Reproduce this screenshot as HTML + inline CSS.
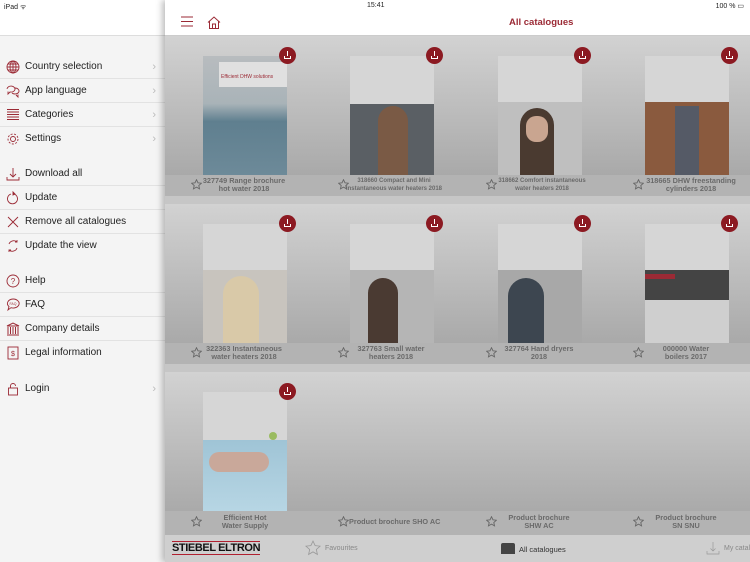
<!DOCTYPE html>
<html><head><meta charset="utf-8"><style>
*{margin:0;padding:0;box-sizing:border-box}
body{width:750px;height:562px;overflow:hidden;position:relative;font-family:"Liberation Sans",sans-serif;background:#f4f4f4}
.abs{position:absolute}
#side{left:0;top:0;width:165px;height:562px;background:#f4f4f4}
#sidetop{left:0;top:0;width:165px;height:36px;background:#fff;border-bottom:1px solid #ddd}
.it{position:absolute;left:0;width:165px;height:24px;font-size:10px;color:#222;line-height:24px;padding-left:25px}
.it.b{border-bottom:1px solid #e2e2e2}
.it svg{position:absolute;left:6px;top:5px}
.chev{position:absolute;right:9px;top:0;color:#bbb;font-size:11px}
#main{left:165px;top:0;width:585px;height:562px;background:#c6c6c6;box-shadow:-3px 0 6px rgba(0,0,0,.25)}
#nav{left:165px;top:0;width:585px;height:36px;background:#fff;border-bottom:1px solid #ccc}
.row{position:absolute;left:165px;width:585px;height:160px;background:linear-gradient(#d2d2d2,#a9a9a9 87%)}
.lab{position:absolute;left:0;bottom:0;width:585px;height:21px;background:#b3b3b3}
.cell{position:absolute;width:146px;height:160px}
.cov{position:absolute;left:38px;top:20px;width:84px;height:119px;background:#d6d6d6;overflow:hidden}
.dl{position:absolute;left:114px;top:11px;width:17px;height:17px;border-radius:50%;background:#8c1a22}
.star{position:absolute;left:26px;top:143px}
.t{position:absolute;left:36px;top:141px;width:86px;text-align:center;font-size:7.3px;font-weight:bold;color:#6a6a6a;line-height:8px}
#tab{left:165px;top:535px;width:585px;height:27px;background:#cfcfcf}
</style></head><body>
<div id="side" class="abs"></div>
<div id="sidetop" class="abs"><span style="position:absolute;left:4px;top:3px;font-size:7px;color:#222">iPad ᯤ</span></div>
<div class="it b" style="top:55px"><svg width="14" height="14" viewBox="0 0 14 14" fill="none" stroke="#9b2a35" stroke-width=".9"><circle cx="7" cy="7" r="6"/><ellipse cx="7" cy="7" rx="3" ry="6"/><path d="M1 7h12M2 4h10M2 10h10M7 1v12"/></svg>Country selection<span class="chev">›</span></div>
<div class="it b" style="top:79px"><svg width="14" height="14" viewBox="0 0 14 14" fill="none" stroke="#9b2a35" stroke-width=".9"><path d="M1 5a4 3 0 1 1 3 3l-2 2v-2.5M6 9a4 3 0 1 0 3-5M10 11l2 2v-2.5"/></svg>App language<span class="chev">›</span></div>
<div class="it b" style="top:103px"><svg width="14" height="14" viewBox="0 0 14 14" stroke="#9b2a35" stroke-width="1"><path d="M1 1.5h12M1 4h12M1 6.5h12M1 9h12M1 11.5h12"/></svg>Categories<span class="chev">›</span></div>
<div class="it" style="top:127px"><svg width="14" height="14" viewBox="0 0 14 14" fill="none" stroke="#9b2a35" stroke-width=".9"><circle cx="7" cy="7" r="2.5"/><circle cx="7" cy="7" r="5" stroke-dasharray="2 1.5"/></svg>Settings<span class="chev">›</span></div>
<div class="it b" style="top:162px"><svg width="14" height="14" viewBox="0 0 14 14" fill="none" stroke="#9b2a35" stroke-width=".9"><path d="M7 1v9M4 7l3 3 3-3M1 10v3h12v-3"/></svg>Download all</div>
<div class="it b" style="top:186px"><svg width="14" height="14" viewBox="0 0 14 14" fill="none" stroke="#9b2a35" stroke-width=".9"><path d="M5 3a5 5 0 1 0 3 0"/><path d="M7 1l2 2-2 1z" fill="#9b2a35"/></svg>Update</div>
<div class="it b" style="top:210px"><svg width="14" height="14" viewBox="0 0 14 14" stroke="#9b2a35" stroke-width=".9"><path d="M2 2l10 10M12 2L2 12"/></svg>Remove all catalogues</div>
<div class="it" style="top:234px"><svg width="14" height="14" viewBox="0 0 14 14" fill="none" stroke="#9b2a35" stroke-width=".9"><path d="M3 5a5 5 0 0 1 8-2M11 9a5 5 0 0 1-8 2M11 1v2h-2M3 13v-2h2"/></svg>Update the view</div>
<div class="it b" style="top:269px"><svg width="14" height="14" viewBox="0 0 14 14" fill="none" stroke="#9b2a35" stroke-width=".9"><circle cx="7" cy="7" r="6"/><text x="7" y="10" font-size="8" text-anchor="middle" fill="#9b2a35" stroke="none">?</text></svg>Help</div>
<div class="it b" style="top:293px"><svg width="14" height="14" viewBox="0 0 14 14" fill="none" stroke="#9b2a35" stroke-width=".9"><path d="M7 1a6 4.5 0 1 1-2 8.7L2 12l1-3.5A6 4.5 0 0 1 7 1z"/><text x="7" y="7" font-size="3.5" text-anchor="middle" fill="#9b2a35" stroke="none">FAQ</text></svg>FAQ</div>
<div class="it b" style="top:317px"><svg width="14" height="14" viewBox="0 0 14 14" fill="none" stroke="#9b2a35" stroke-width="1"><path d="M1 4L7 1l6 3zM2 5v7M4.5 5v7M7 5v7M9.5 5v7M12 5v7M1 13h12"/></svg>Company details</div>
<div class="it" style="top:341px"><svg width="14" height="14" viewBox="0 0 14 14" fill="none" stroke="#9b2a35" stroke-width=".9"><rect x="2" y="1" width="10" height="12"/><text x="7" y="10" font-size="7" text-anchor="middle" fill="#9b2a35" stroke="none">$</text></svg>Legal information</div>
<div class="it" style="top:377px"><svg width="14" height="14" viewBox="0 0 14 14" fill="none" stroke="#9b2a35" stroke-width=".9"><rect x="2.5" y="6" width="9" height="7"/><path d="M4.5 6V4a2.5 2.5 0 0 1 5 0"/></svg>Login<span class="chev">›</span></div>

<div id="main" class="abs"></div>
<div id="nav" class="abs">
<span style="position:absolute;top:2px;font-size:7px;color:#222;left:202px">15:41</span>
<span style="position:absolute;right:6px;top:2px;font-size:7px;color:#222">100 % ▭</span>
<svg style="position:absolute;left:16px;top:16px" width="12" height="11" viewBox="0 0 12 11" stroke="#9b2a35" stroke-width="1"><path d="M0 1h12M0 5.5h12M0 10h12"/></svg>
<svg style="position:absolute;left:42px;top:16px" width="14" height="13" viewBox="0 0 14 13" fill="none" stroke="#9b2a35" stroke-width="1"><path d="M1 6.5L7 1l6 5.5M2.5 5v7.5h9V5M5.5 12.5V8h3v4.5"/></svg>
<span style="position:absolute;left:344px;top:17px;font-size:9.5px;font-weight:bold;color:#9b2a35">All catalogues</span>
</div>

<div class="row" style="top:36px"><div class="lab"></div>
<div class="cell" style="left:0"><div class="cov" style="background:linear-gradient(#b8bcbf 0,#a9b3b8 40%,#5f7f8f 55%,#6d8a99 100%)"><div style="position:absolute;left:16px;top:6px;width:68px;height:25px;background:#e0e0e0"></div><div style="position:absolute;left:18px;top:18px;font-size:5px;color:#9b2a35">Efficient DHW solutions</div></div><div class="dl"></div><svg class="star" width="11" height="11" viewBox="0 0 12 12" fill="none" stroke="#666" stroke-width="1"><path d="M6 .8l1.6 3.4 3.7.4-2.8 2.5.8 3.7L6 8.9 2.7 10.8l.8-3.7L.7 4.6l3.7-.4z"/></svg><div class="t">327749 Range brochure hot water 2018</div></div>
<div class="cell" style="left:147px"><div class="cov"><div style="position:absolute;left:0;top:48px;width:84px;height:71px;background:#5a5f64"></div><div style="position:absolute;left:28px;top:50px;width:30px;height:69px;border-radius:15px 15px 0 0;background:#7a5a45"></div></div><div class="dl"></div><svg class="star" width="11" height="11" viewBox="0 0 12 12" fill="none" stroke="#666" stroke-width="1"><path d="M6 .8l1.6 3.4 3.7.4-2.8 2.5.8 3.7L6 8.9 2.7 10.8l.8-3.7L.7 4.6l3.7-.4z"/></svg><div class="t" style="font-size:6px;width:100px;left:32px">318660 Compact and Mini instantaneous water heaters 2018</div></div>
<div class="cell" style="left:295px"><div class="cov"><div style="position:absolute;left:0;top:46px;width:84px;height:73px;background:#bfbfbf"></div><div style="position:absolute;left:22px;top:52px;width:34px;height:67px;border-radius:17px 17px 0 0;background:#4a3a30"></div><div style="position:absolute;left:28px;top:60px;width:22px;height:26px;border-radius:10px;background:#c9a590"></div></div><div class="dl"></div><svg class="star" width="11" height="11" viewBox="0 0 12 12" fill="none" stroke="#666" stroke-width="1"><path d="M6 .8l1.6 3.4 3.7.4-2.8 2.5.8 3.7L6 8.9 2.7 10.8l.8-3.7L.7 4.6l3.7-.4z"/></svg><div class="t" style="font-size:6px;width:96px;left:34px">318662 Comfort instantaneous water heaters 2018</div></div>
<div class="cell" style="left:442px"><div class="cov"><div style="position:absolute;left:0;top:46px;width:84px;height:73px;background:#8a5a3e"></div><div style="position:absolute;left:30px;top:50px;width:24px;height:69px;background:#555a66"></div></div><div class="dl"></div><svg class="star" width="11" height="11" viewBox="0 0 12 12" fill="none" stroke="#666" stroke-width="1"><path d="M6 .8l1.6 3.4 3.7.4-2.8 2.5.8 3.7L6 8.9 2.7 10.8l.8-3.7L.7 4.6l3.7-.4z"/></svg><div class="t" style="width:100px;left:34px">318665 DHW freestanding cylinders 2018</div></div>
</div>

<div class="row" style="top:204px"><div class="lab"></div>
<div class="cell" style="left:0"><div class="cov"><div style="position:absolute;left:0;top:46px;width:84px;height:73px;background:#c8c4be"></div><div style="position:absolute;left:20px;top:52px;width:36px;height:67px;border-radius:18px 18px 0 0;background:#d9c9a8"></div></div><div class="dl"></div><svg class="star" width="11" height="11" viewBox="0 0 12 12" fill="none" stroke="#666" stroke-width="1"><path d="M6 .8l1.6 3.4 3.7.4-2.8 2.5.8 3.7L6 8.9 2.7 10.8l.8-3.7L.7 4.6l3.7-.4z"/></svg><div class="t">322363 Instantaneous water heaters 2018</div></div>
<div class="cell" style="left:147px"><div class="cov"><div style="position:absolute;left:0;top:46px;width:84px;height:73px;background:#b5b5b5"></div><div style="position:absolute;left:18px;top:54px;width:30px;height:65px;border-radius:15px 15px 0 0;background:#4a3a32"></div></div><div class="dl"></div><svg class="star" width="11" height="11" viewBox="0 0 12 12" fill="none" stroke="#666" stroke-width="1"><path d="M6 .8l1.6 3.4 3.7.4-2.8 2.5.8 3.7L6 8.9 2.7 10.8l.8-3.7L.7 4.6l3.7-.4z"/></svg><div class="t">327763 Small water heaters 2018</div></div>
<div class="cell" style="left:295px"><div class="cov"><div style="position:absolute;left:0;top:46px;width:84px;height:73px;background:#a8a8a8"></div><div style="position:absolute;left:10px;top:54px;width:36px;height:65px;border-radius:18px 18px 0 0;background:#3d4650"></div></div><div class="dl"></div><svg class="star" width="11" height="11" viewBox="0 0 12 12" fill="none" stroke="#666" stroke-width="1"><path d="M6 .8l1.6 3.4 3.7.4-2.8 2.5.8 3.7L6 8.9 2.7 10.8l.8-3.7L.7 4.6l3.7-.4z"/></svg><div class="t" style="width:70px;left:44px">327764 Hand dryers 2018</div></div>
<div class="cell" style="left:442px"><div class="cov"><div style="position:absolute;left:0;top:46px;width:84px;height:30px;background:#444"></div><div style="position:absolute;left:0;top:50px;width:30px;height:5px;background:#9b2a35"></div><div style="position:absolute;left:0;top:76px;width:84px;height:43px;background:#cfcfcf"></div></div><div class="dl"></div><svg class="star" width="11" height="11" viewBox="0 0 12 12" fill="none" stroke="#666" stroke-width="1"><path d="M6 .8l1.6 3.4 3.7.4-2.8 2.5.8 3.7L6 8.9 2.7 10.8l.8-3.7L.7 4.6l3.7-.4z"/></svg><div class="t" style="width:70px;left:44px">000000 Water boilers 2017</div></div>
</div>

<div class="row" style="top:372px;height:163px"><div class="lab" style="height:24px"></div>
<div class="cell" style="left:0"><div class="cov"><div style="position:absolute;left:0;top:48px;width:84px;height:71px;background:linear-gradient(#9fc4d6,#b7d6e4)"></div><div style="position:absolute;left:6px;top:60px;width:60px;height:20px;border-radius:10px;background:#c9a89a"></div><div style="position:absolute;left:66px;top:40px;width:8px;height:8px;border-radius:50%;background:#9abb60"></div></div><div class="dl"></div><svg class="star" style="top:144px" width="11" height="11" viewBox="0 0 12 12" fill="none" stroke="#666" stroke-width="1"><path d="M6 .8l1.6 3.4 3.7.4-2.8 2.5.8 3.7L6 8.9 2.7 10.8l.8-3.7L.7 4.6l3.7-.4z"/></svg><div class="t" style="top:142px;width:60px;left:50px">Efficient Hot Water Supply</div></div>
<div class="cell" style="left:147px"><svg class="star" style="top:144px;left:26px" width="11" height="11" viewBox="0 0 12 12" fill="none" stroke="#666" stroke-width="1"><path d="M6 .8l1.6 3.4 3.7.4-2.8 2.5.8 3.7L6 8.9 2.7 10.8l.8-3.7L.7 4.6l3.7-.4z"/></svg><div class="t" style="top:146px;left:37px;text-align:left;width:110px">Product brochure SHO AC</div></div>
<div class="cell" style="left:295px"><svg class="star" style="top:144px" width="11" height="11" viewBox="0 0 12 12" fill="none" stroke="#666" stroke-width="1"><path d="M6 .8l1.6 3.4 3.7.4-2.8 2.5.8 3.7L6 8.9 2.7 10.8l.8-3.7L.7 4.6l3.7-.4z"/></svg><div class="t" style="top:142px;width:70px;left:44px">Product brochure SHW AC</div></div>
<div class="cell" style="left:442px"><svg class="star" style="top:144px" width="11" height="11" viewBox="0 0 12 12" fill="none" stroke="#666" stroke-width="1"><path d="M6 .8l1.6 3.4 3.7.4-2.8 2.5.8 3.7L6 8.9 2.7 10.8l.8-3.7L.7 4.6l3.7-.4z"/></svg><div class="t" style="top:142px;width:70px;left:44px">Product brochure SN SNU</div></div>
</div>

<div id="tab" class="abs">
<div style="position:absolute;left:7px;top:6px;font-size:11px;font-weight:bold;color:#111;border-top:1px solid #b02030;border-bottom:1px solid #b02030;letter-spacing:-.4px;line-height:12px">STIEBEL ELTRON</div>
<svg style="position:absolute;left:140px;top:5px" width="16" height="16" viewBox="0 0 12 12" fill="none" stroke="#999" stroke-width=".6"><path d="M6 .8l1.6 3.4 3.7.4-2.8 2.5.8 3.7L6 8.9 2.7 10.8l.8-3.7L.7 4.6l3.7-.4z"/></svg>
<span style="position:absolute;left:160px;top:10px;font-size:7px;color:#888">Favourites</span>
<div style="position:absolute;left:336px;top:8px;width:14px;height:11px;background:#444;border-radius:2px 2px 0 0"></div>
<span style="position:absolute;left:354px;top:10px;font-size:7.5px;color:#333">All catalogues</span>
<svg style="position:absolute;left:541px;top:6px" width="14" height="14" viewBox="0 0 14 14" fill="none" stroke="#999" stroke-width=".7"><path d="M7 1v9M4.5 7.5L7 10l2.5-2.5M1 10v3h12v-3"/></svg>
<span style="position:absolute;left:559px;top:10px;font-size:7px;color:#888;white-space:nowrap">My catalogues</span>
</div>
<style>.dl::after{content:"";position:absolute;left:5px;top:4px;width:7px;height:8px;background:
linear-gradient(#fff,#fff) 3px 0/1px 5px no-repeat,
linear-gradient(#fff,#fff) 0 7px/7px 1px no-repeat,
linear-gradient(#fff,#fff) 0 5px/1px 3px no-repeat,
linear-gradient(#fff,#fff) 6px 5px/1px 3px no-repeat}</style>
</body></html>
